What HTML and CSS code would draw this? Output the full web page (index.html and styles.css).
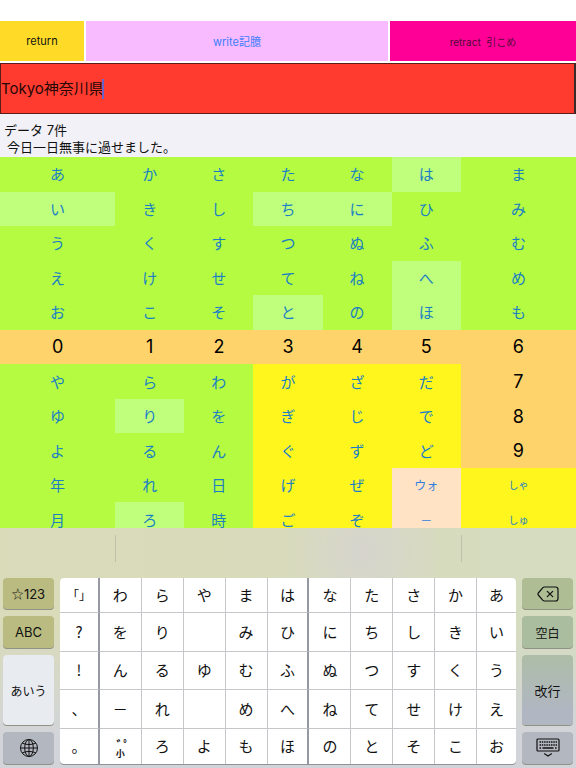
FILE: index.html
```
<!DOCTYPE html>
<html lang="ja">
<head>
<meta charset="utf-8">
<meta name="viewport" content="width=device-width, initial-scale=1">
<title>データ</title>
<link rel="stylesheet" href="styles.css">
</head>
<body>
<header class="toolbar">
  <button class="tool tool-return">return</button>
  <button class="tool tool-write">write記臆</button>
  <button class="tool tool-retract">retract&nbsp; 引こめ</button>
</header>
<div class="entry">
  <input class="entry-input" type="text" aria-label="入力" value="Tokyo神奈川県">
  <span class="caret"></span>
</div>
<section class="log">
  <p class="log-title">データ 7件</p>
  <p class="log-line">今日一日無事に過せました。</p>
</section>
<main class="board">
  <div class="board-grid" id="board"></div>
</main>
<section class="keyboard">
  <div class="suggestions"><span></span><span></span><span></span></div>
  <div class="keys">
    <div class="side">
      <button class="key key-olive"><span class="star">☆</span>123</button>
      <button class="key key-olive">ABC</button>
      <button class="key key-light key-kana">あいう</button>
      <button class="key key-gray" aria-label="地球儀">
        <svg width="20" height="20" viewBox="0 0 20 20" fill="none" stroke="#111" stroke-width="1"><circle cx="10" cy="10" r="8.5"/><ellipse cx="10" cy="10" rx="4.3" ry="8.5"/><path d="M10 1.5v17M1.5 10h17M3.3 5.2c4 1.8 9.4 1.8 13.4 0M3.3 14.8c4-1.8 9.4-1.8 13.4 0"/></svg>
      </button>
    </div>
    <div class="pad" id="pad"></div>
    <div class="side">
      <button class="key key-green" aria-label="削除">
        <svg width="22" height="16" viewBox="0 0 22 16" fill="none" stroke="#111" stroke-width="1.2" stroke-linecap="round" stroke-linejoin="round"><path d="M7.5 1H18.5Q21 1 21 3.5V12.5Q21 15 18.5 15H7.5Q6.5 15 5.7 14.2L1.3 9Q.6 8 1.3 7L5.7 1.8Q6.5 1 7.5 1ZM10.300 5.300l5.400 5.400M15.700 5.300l-5.400 5.400"/></svg>
      </button>
      <button class="key key-green key-space">空白</button>
      <button class="key key-fade">改行</button>
      <button class="key key-gray" aria-label="キーボードを隠す">
        <svg width="24" height="20" viewBox="0 0 24 20" fill="none" stroke="#111" stroke-width="1.2"><rect x="1" y="1" width="22" height="12" rx="1"/><path d="M3.5 4h17.5M3.5 7h17.5" stroke-width="1.6" stroke-dasharray="1.5 .8"/><path d="M3.5 10h1.6M6.5 10h11M19 10h1.6" stroke-width="1.6"/><path d="M8.5 15.8l3.5 2.2 3.5-2.2" stroke-linecap="round"/></svg>
      </button>
    </div>
  </div>
</section>
<script src="app.js"></script>
</body>
</html>
```
FILE: styles.css
```
* { box-sizing: border-box; }
body {
  margin: 0;
  height: 100vh;
  display: flex;
  flex-direction: column;
  overflow: hidden;
  background: #fff;
  color: #111;
  font-family: Inter, "Noto Sans CJK JP", sans-serif;
}
button {
  margin: 0;
  padding: 0;
  border: 0;
  background: none;
  color: inherit;
  font: inherit;
}
.toolbar {
  display: grid;
  grid-template-columns: 84fr 302fr 186fr;
  gap: 2px;
  height: 40px;
  margin-top: 21px;
  flex: none;
}
.tool { font-size: 11px; }
.tool-return { background: #ffdb27; }
.tool-write { background: #f8bbff; color: #3d7eff; }
.tool-retract { background: #ff0096; color: #50093a; font-size: 10px; }
.entry {
  display: flex;
  align-items: center;
  flex: none;
  height: 51px;
  margin-top: 2px;
  border: 1px solid #5c1c18;
  border-right: 2px solid #3c2a28;
  background: #ff3b30;
}
.entry-input {
  field-sizing: content;
  max-width: 100%;
  height: 46px;
  padding: 0 0 2px;
  border: 0;
  outline: 0;
  background: none;
  color: #260806;
  font: 15px Inter, "Noto Sans CJK JP", sans-serif;
}
.caret {
  width: 2px;
  height: 20px;
  margin-left: -2px;
  background: #6b62c8;
}
.log {
  flex: none;
  height: 43px;
  padding: 8px 4px 0;
  background: #f2f1f7;
  font-size: 13px;
  line-height: 17px;
}
.log p { margin: 0; }
.log .log-line { padding-left: 3px; }
.board {
  flex: 1;
  min-height: 0;
  overflow: hidden;
}
.board-grid {
  display: grid;
  grid-template-columns: 5fr repeat(5, 3fr) 5fr;
  grid-template-rows: repeat(11, 1fr);
  height: 380px;
  background: #b4fb41;
}
.cell { padding-bottom: 1px; color: #1a7fc4; font-size: 15px; }
.cell-lit { background: #c0ff7c; }
.cell-num { padding: 0; background: #ffd36b; color: #000; font-size: 18px; }
.cell-voiced { background: #fff61e; }
.cell-peach { background: #ffe3c4; font-size: 12px; color: #2f7fe0; }
.cell-small { background: #fff61e; font-size: 10px; }
.keyboard {
  flex: none;
  height: 240px;
  background:
    radial-gradient(ellipse 80px 100px at 63% 10%, rgba(214, 212, 208, .9), rgba(214, 212, 208, 0)),
    linear-gradient(to bottom, rgba(210, 212, 218, 0) 40%, #d2d4da 88%),
    linear-gradient(to right, #d9dbb9, #d8dbbc 60%, #d5dcc0);
}
.suggestions {
  display: grid;
  grid-template-columns: 1fr 3fr 1fr;
  height: 50px;
  padding: 7px 0 16px;
}
.suggestions span + span { border-left: 1px solid #bfc1a9; }
.keys {
  display: grid;
  grid-template-columns: 51px 1fr 51px;
  gap: 6px;
  height: 186px;
  padding: 0 3px;
}
.side {
  display: grid;
  grid-template-rows: 31fr 32fr 70fr 32fr;
  gap: 7px;
}
.key {
  display: flex;
  align-items: center;
  justify-content: center;
  border-radius: 4px;
  box-shadow: 0 1px 0 #8f9284;
  font-size: 13px;
}
.star { font: 12px/16px "Noto Sans CJK JP", sans-serif; }
.key-olive { background: #babb80; }
.key-light { background: #e8ebf0; }
.key-kana { font-size: 12px; }
.key-green { background: #aebd94; }
.key-space { background: #abbd9f; font-size: 12px; }
.key-fade { background: linear-gradient(#adbda7, #b0b6c2 80%); }
.key-gray { background: #b2b7c0; }
.pad {
  display: grid;
  grid-template-columns: 40fr repeat(9, 42fr) 39fr;
  grid-template-rows: 35fr 39fr 38fr 39fr 35fr;
  overflow: hidden;
  border-radius: 4px;
  background: #fff;
  box-shadow: 0 1px 0 #8f9299;
}
.pad-key {
  padding-bottom: 2px;
  border-right: 1px solid #c6c6cb;
  border-bottom: 1px solid #c6c6cb;
  font: 15px "Noto Sans CJK JP", sans-serif;
}
.pad-key:first-child { font-size: 12px; }
.pad-key:nth-child(11n) { border-right: 0; }
.pad-key:nth-child(n + 45) { border-bottom: 0; }
.pad-key:nth-child(11n + 1),
.pad-key:nth-child(11n + 6) { border-right: 2px solid #9698a3; }
.marks {
  display: flex;
  flex-direction: column;
  align-items: center;
  justify-content: center;
  padding: 6px 0 0;
}
.marks-top {
  display: flex;
  padding-left: 6px;
  font-size: 14px;
  font-weight: 700;
  line-height: 8px;
}
.marks-base {
  font-size: 9px;
  font-weight: 700;
  line-height: 10px;
}
```
FILE: app.js
```
const rows = [
  "あ か さ た な は* ま",
  "い* き し ち* に* ひ み",
  "う く す つ ぬ ふ む",
  "え け せ て ね へ* め",
  "お こ そ と* の ほ* も",
  "0 1 2 3 4 5 6",
  "や ら わ が ざ だ 7",
  "ゆ り* を ぎ じ で 8",
  "よ る ん ぐ ず ど 9",
  "年 れ 日 げ ぜ ウォ しゃ",
  "月 ろ* 時 ご ぞ － しゅ"
];
const board = document.getElementById("board");
rows.forEach((row, r) => row.split(" ").forEach((item, c) => {
  const cell = document.createElement("button");
  const text = item.replace("*", "");
  let kind = "";
  if (item.includes("*")) kind = "cell-lit";
  else if (/\d/.test(text)) kind = "cell-num";
  else if (r > 8 && c === 5) kind = "cell-peach";
  else if (r > 8 && c === 6) kind = "cell-small";
  else if (r > 5 && c > 2) kind = "cell-voiced";
  cell.className = ("cell " + kind).trim();
  cell.textContent = text;
  board.append(cell);
}));

const padRows = [
  "「」 わ ら や ま は な た さ か あ",
  "? を り _ み ひ に ち し き い",
  "! ん る ゆ む ふ ぬ つ す く う",
  "、 － れ _ め へ ね て せ け え",
  "。 MARK ろ よ も ほ の と そ こ お"
];
const pad = document.getElementById("pad");
padRows.forEach(row => row.split(" ").forEach(text => {
  const key = document.createElement("button");
  key.className = "pad-key";
  if (text === "MARK") {
    key.classList.add("marks");
    key.innerHTML = '<span class="marks-top"><span>ﾞ</span><span>ﾟ</span></span><span class="marks-base">小</span>';
  } else if (text !== "_") {
    key.textContent = text;
  }
  pad.append(key);
}));
```
